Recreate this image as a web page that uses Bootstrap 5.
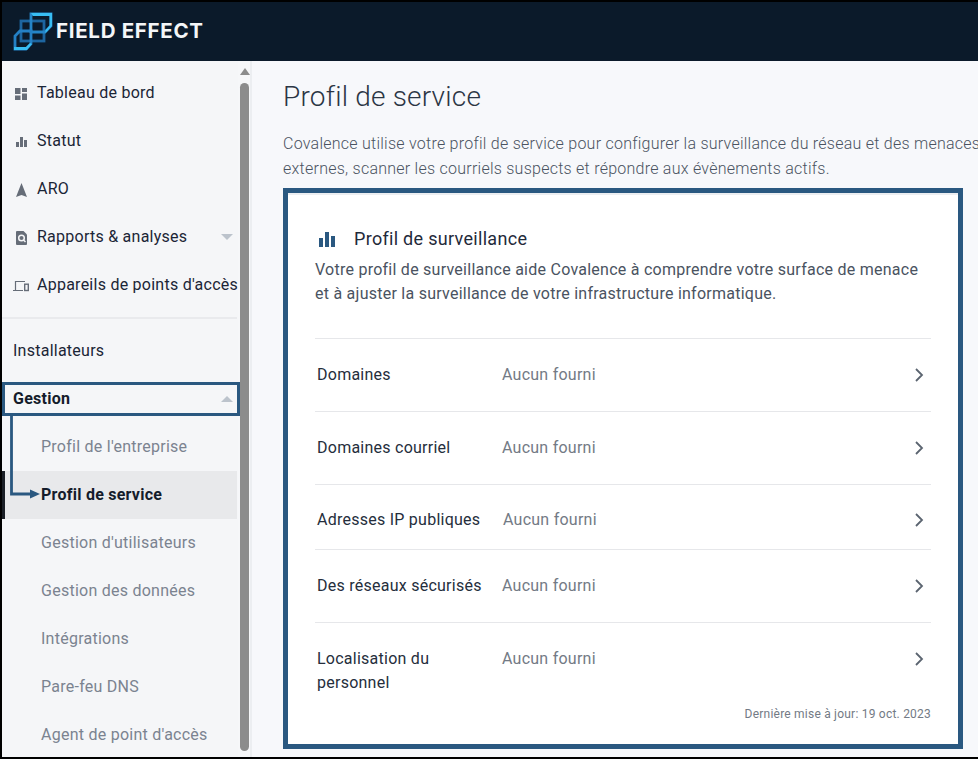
<!DOCTYPE html>
<html lang="fr">
<head>
<meta charset="utf-8">
<title>Profil de service</title>
<link rel="stylesheet" href="https://cdn.jsdelivr.net/npm/bootstrap@5.3.0/dist/css/bootstrap.min.css">
<style>
html,body{height:100%;margin:0;overflow:hidden}
body{font-family:Roboto,"Liberation Sans",sans-serif;background:#000;color:#1f2a3a}
.shell{width:978px;height:759px;padding:2px 0 2px 2px;background:#000;position:relative;overflow:hidden}
.topbar{height:59px;background:#0b1a2a;padding-left:11px}
.brand{font-family:Inter,"Liberation Sans",sans-serif;font-weight:700;font-size:20.5px;color:#f4f6f8;letter-spacing:.7px;margin-left:3px;margin-top:-1px;white-space:nowrap}
.body-row{height:696px;background:#f7f8fb}
.rail{width:250px;background:#f5f6f8;overflow:hidden;position:relative;flex:none}
.rail-list{width:235px;padding-top:8px}
.rail-item{height:48px;padding-left:11px;font-size:16px;letter-spacing:.25px;color:#1b2536;white-space:nowrap;position:relative}
.rail-item svg.ico{width:16px;height:16px;margin-right:8px;flex:none}
.rail-item.sub{padding-left:39px;color:#7b8390}
.rail-item.act{background:#e8e9eb;font-weight:700;color:#141c2b;margin-left:3px;padding-left:36px}
.rail-item.strong{font-weight:700;color:#141c2b}
.act-bar{position:absolute;left:-3px;top:0;bottom:0;width:3px;background:#1a1f26}
.caret{position:absolute;right:4px;top:21px;border-left:6px solid transparent;border-right:6px solid transparent}
.caret-d{border-top:6px solid #bcc3cc}
.caret-u{border-bottom:6px solid #bcc3cc}
.rule{height:2px;background:#e9eaed;margin:8px 0 8px;width:235px}
.scroll-track{position:absolute;left:236px;top:0;bottom:0;width:12px;background:#f6f7f9}
.scroll-thumb{position:absolute;left:2px;top:22px;height:668px;width:9px;background:#8c8c8c;border-radius:5px}
.scroll-up{position:absolute;left:2px;top:7px;border-left:5px solid transparent;border-right:5px solid transparent;border-bottom:7px solid #8c8c8c}
.rail-edge{position:absolute;right:0;top:0;bottom:0;width:2px;background:#eceef1}
.main-pane{flex:1;min-width:0;padding:0 0 0 31px;overflow:hidden}
.page-h{font-size:28px;font-weight:300;color:#2b3544;letter-spacing:.2px;line-height:36px;margin:18px 0 0}
.page-p{font-size:16px;line-height:25px;color:#4a5361;white-space:nowrap;letter-spacing:.25px;margin:16px 0 0;font-weight:300;width:800px}
.panel{width:680px;height:561px;border:5px solid #2a5880;background:#fff;margin-top:7px;padding:0 27px;box-shadow:inset 0 2px 0 #eceef1}
.panel-h{font-size:18px;font-weight:400;color:#1f2a3a;letter-spacing:.3px;margin:0;padding-top:33px;line-height:26px}
.panel-h svg{width:18px;height:18px;margin-right:18px;margin-left:3px}
.panel-p{font-size:16px;line-height:24px;color:#4a5361;letter-spacing:.25px;margin:6px 0 0}
.rows-wrap{margin-top:32px}
.data-row{border-top:1px solid #e6e7ea;padding:0 2px;font-size:16px;letter-spacing:.25px;color:#252e3c;position:relative}
.data-row .lab{width:185px;flex:none;line-height:24px;white-space:nowrap}
.data-row .lab-wide{width:186px}
.data-row .val{color:#737a85;line-height:24px}
.data-row svg{position:absolute;right:5px;width:14px;height:14px;margin-top:5px}
.r73{height:73px;padding-top:24px}
.r65{height:65px;padding-top:23px}
.r-last{height:82px;padding-top:24px}
.stamp{font-size:12px;color:#737a85;text-align:right;letter-spacing:.22px;margin-top:1px}
.note-box{position:absolute;left:2px;top:382px;width:238px;height:34px;border:3px solid #2a5880}
.note-arrow{position:absolute;left:8px;top:414px;width:36px;height:86px}
</style>
</head>
<body>
<div class="shell">
  <div class="topbar d-flex align-items-center">
    <svg width="40" height="40" viewBox="13 12 40 40" fill="none">
      <rect x="21" y="21" width="23" height="20" stroke="#1d659f" stroke-width="2.800"/>
      <path d="M31 33V14h20v12l-6 6H31z" stroke="#2585c8" stroke-width="2.800"/>
      <path d="M31 13h21v13l-6.500 7v-3l4-4.500V16H33z" fill="#38bdf2"/>
      <path d="M15 49V36l5-5h11v13l-5 5z" stroke="#2480c4" stroke-width="2.800"/>
      <path d="M14 47h12l4-4 2 1-5 6H14z" fill="#38bdf2"/>
    </svg>
    <span class="brand">FIELD EFFECT</span>
  </div>
  <div class="d-flex body-row">
    <nav class="rail">
      <div class="rail-list">
        <div class="rail-item d-flex align-items-center">
          <svg class="ico" viewBox="0 0 16 16" fill="#666d78"><path d="M2 3h5.500v6H2zM9 3h5v4H9zM9 8.500h5V15H9zM2 10.500h5.500V15H2z"/></svg>Tableau de bord</div>
        <div class="rail-item d-flex align-items-center">
          <svg class="ico" viewBox="0 0 16 16" fill="#666d78"><path d="M3 9h3v5H3zM7 4h3v10H7zM11 7h3v7h-3z"/></svg>Statut</div>
        <div class="rail-item d-flex align-items-center">
          <svg class="ico" viewBox="0 0 16 16" fill="#666d78"><path d="M8.500 2l5.500 14-5.500-2L3 16z"/></svg>ARO</div>
        <div class="rail-item d-flex align-items-center">
          <svg class="ico" viewBox="0 0 16 16"><path fill="#666d78" d="M3.500 2h7l3.500 3.500V15a1 1 0 0 1-1 1H4a1 1 0 0 1-1-1V3z"/><circle cx="8.500" cy="9" r="2.800" fill="none" stroke="#f5f6f8" stroke-width="1.500"/><path d="M10.500 11l2 2" stroke="#f5f6f8" stroke-width="1.500"/></svg>Rapports &amp; analyses<span class="caret caret-d"></span></div>
        <div class="rail-item d-flex align-items-center">
          <svg class="ico" viewBox="0 0 16 16" fill="none" stroke="#666d78" stroke-width="1.200"><path d="M12 4.500H2.500v8.500M0 13.500h10"/><rect x="11.700" y="7.200" width="3.600" height="6.300" stroke-width="1.400"/></svg>Appareils de points d'accès</div>
      </div>
      <div class="rule"></div>
      <div class="rail-list pt-0">
        <div class="rail-item d-flex align-items-center">Installateurs</div>
        <div class="rail-item strong d-flex align-items-center">Gestion<span class="caret caret-u"></span></div>
        <div class="rail-item sub d-flex align-items-center">Profil de l'entreprise</div>
        <div class="rail-item act d-flex align-items-center"><span class="act-bar"></span>Profil de service</div>
        <div class="rail-item sub d-flex align-items-center">Gestion d'utilisateurs</div>
        <div class="rail-item sub d-flex align-items-center">Gestion des données</div>
        <div class="rail-item sub d-flex align-items-center">Intégrations</div>
        <div class="rail-item sub d-flex align-items-center">Pare-feu DNS</div>
        <div class="rail-item sub d-flex align-items-center">Agent de point d'accès</div>
      </div>
      <div class="scroll-track"><span class="scroll-up"></span><span class="scroll-thumb"></span></div>
      <div class="rail-edge"></div>
    </nav>
    <main class="main-pane">
      <h1 class="page-h">Profil de service</h1>
      <p class="page-p">Covalence utilise votre profil de service pour configurer la surveillance du réseau et des menaces<br>externes, scanner les courriels suspects et répondre aux évènements actifs.</p>
      <section class="panel">
        <h2 class="panel-h d-flex align-items-center">
          <svg viewBox="0 0 18 18" fill="#2a5880"><path d="M1 8h4v9H1zM7 2h4v15H7zM13 6h4v11h-4z"/></svg>Profil de surveillance</h2>
        <p class="panel-p">Votre profil de surveillance aide Covalence à comprendre votre surface de menace<br>et à ajuster la surveillance de votre infrastructure informatique.</p>
        <div class="rows-wrap">
          <div class="data-row r73 d-flex"><span class="lab">Domaines</span><span class="val">Aucun fourni</span><svg viewBox="0 0 14 14" fill="none" stroke="#5b6470" stroke-width="1.800"><path d="M4 1l6 6-6 6"/></svg></div>
          <div class="data-row r73 d-flex"><span class="lab">Domaines courriel</span><span class="val">Aucun fourni</span><svg viewBox="0 0 14 14" fill="none" stroke="#5b6470" stroke-width="1.800"><path d="M4 1l6 6-6 6"/></svg></div>
          <div class="data-row r65 d-flex"><span class="lab lab-wide">Adresses IP publiques</span><span class="val">Aucun fourni</span><svg viewBox="0 0 14 14" fill="none" stroke="#5b6470" stroke-width="1.800"><path d="M4 1l6 6-6 6"/></svg></div>
          <div class="data-row r73 d-flex"><span class="lab">Des réseaux sécurisés</span><span class="val">Aucun fourni</span><svg viewBox="0 0 14 14" fill="none" stroke="#5b6470" stroke-width="1.800"><path d="M4 1l6 6-6 6"/></svg></div>
          <div class="data-row r-last d-flex"><span class="lab">Localisation du<br>personnel</span><span class="val">Aucun fourni</span><svg viewBox="0 0 14 14" fill="none" stroke="#5b6470" stroke-width="1.800"><path d="M4 1l6 6-6 6"/></svg></div>
          <div class="stamp">Dernière mise à jour: 19 oct. 2023</div>
        </div>
      </section>
    </main>
  </div>
  <div class="note-box"></div>
  <svg class="note-arrow" viewBox="0 0 36 86" fill="none"><path d="M3.500 0v80H24" stroke="#2a5880" stroke-width="2.800"/><path d="M22 75.500l10 4.500-10 4.500z" fill="#2a5880"/></svg>
</div>
</body>
</html>
